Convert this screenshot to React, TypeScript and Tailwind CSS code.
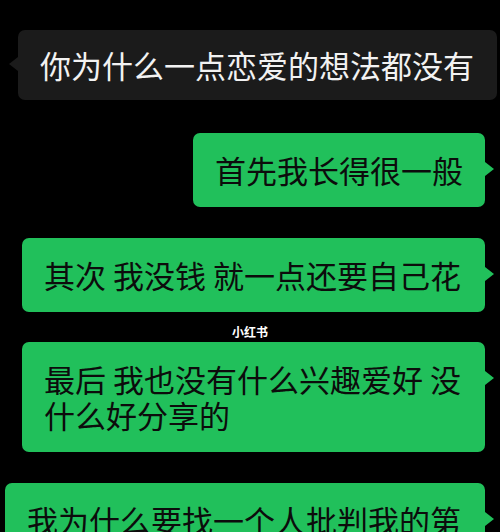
const font = { fontFamily: '"Noto Sans CJK SC", "Noto Sans", sans-serif' };

function LeftTail() {
  return (
    <span className="absolute left-[-9px] top-[27px] h-0 w-0 border-y-[7px] border-r-[9px] border-y-transparent border-r-[#1b1b1b]" />
  );
}

function RightTail() {
  return (
    <span className="absolute right-[-9px] top-[29px] h-0 w-0 border-y-[7px] border-l-[9px] border-y-transparent border-l-[#21c05b]" />
  );
}

function Green({ className, children }: { className: string; children: React.ReactNode }) {
  return (
    <div className={`relative rounded-[7px] bg-[#21c05b] py-[19px] pl-[22px] pr-[22px] text-[31px] leading-[36px] text-[#0c0c0c] ${className}`}>
      {children}
      <RightTail />
    </div>
  );
}

export default function App() {
  return (
    <div className="relative h-[532px] w-[500px] overflow-hidden bg-black" style={font}>
      <div className="flex flex-col pt-[30px]">
        <div className="relative ml-[18px] mr-[3px] rounded-[7px] bg-[#1b1b1b] py-[17px] pl-[22px] pr-[22px] text-[31px] leading-[36px] text-[#f2f2f2]">
          你为什么一点恋爱的想法都没有
          <LeftTail />
        </div>

        <Green className="mr-[15px] mt-[33px] self-end whitespace-nowrap">首先我长得很一般</Green>

        <Green className="ml-[22px] mr-[15px] mt-[31px] whitespace-nowrap">其次 我没钱 就一点还要自己花</Green>

        <Green className="ml-[22px] mr-[15px] mt-[30px] whitespace-nowrap">
          最后 我也没有什么兴趣爱好 没
          <br />
          什么好分享的
        </Green>

        <Green className="ml-[5px] mr-[15px] mt-[31px] whitespace-nowrap">我为什么要找一个人批判我的第</Green>
      </div>

      <span className="absolute left-1/2 top-[324px] -translate-x-1/2 text-[12px] font-bold leading-[16px] text-white">
        小红书
      </span>
    </div>
  );
}
